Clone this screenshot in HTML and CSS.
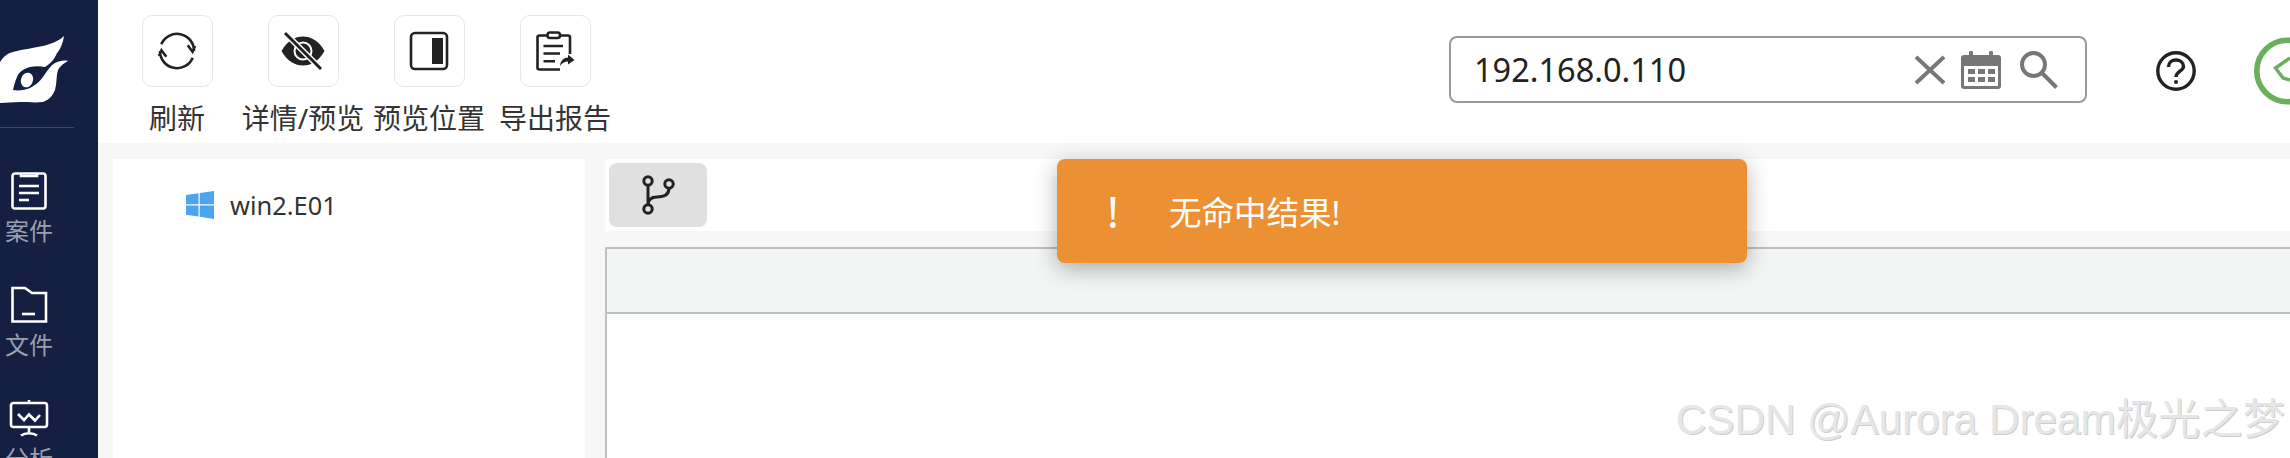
FILE: index.html
```html
<!DOCTYPE html>
<html lang="zh-CN">
<head>
    <meta charset="UTF-8">
    <meta name="viewport" content="width=device-width, initial-scale=1.0">
    <title>案件</title>
    <link rel="stylesheet" href="styles.css">
</head>
<body>
    <div class="sidebar">
        <div class="logo">
            <svg width="98" height="127" viewBox="0 0 98 127">
                <path fill="#fff" d="M0 62 C4 56 8 53 13 52 C24 49 34 48 43 46 C51 44 59 41 64 36 C63 43 60 50 57 53 C54 60 50 64 45 67 C40 66 35 66 30 67 C23 69 19 72 17 77 C15 81 14 86 13 90 C19 91 25 90 30 88 C36 85 40 81 43 77 C47 71 50 66 55 63 C59 61 64 60 68 61 C64 63 60 66 58 70 C56 76 57 83 55 90 C53 95 49 100 43 102 C35 103 28 102 20 102 C13 102 6 103 0 103 Z"/>
                <ellipse fill="#fff" cx="27" cy="80" rx="6" ry="7.5" transform="rotate(20 27 80)"/>
            </svg>
        </div>
        <div class="side-item first">
            <svg class="side-icon" width="58" height="40" viewBox="0 0 58 40">
                <rect x="12.5" y="2.5" width="33" height="35" rx="2.5"/>
                <path d="M21 2.5 V5 H37 V2.5 M19 15 H39 M19 22 H39 M19 29 H29"/>
            </svg>
            <span>案件</span>
        </div>
        <div class="side-item">
            <svg class="side-icon" width="58" height="40" viewBox="0 0 58 40">
                <path d="M12.5 3 H25 L32 8 H46 V36.5 H12.5 Z"/>
                <path d="M22 29 H35"/>
            </svg>
            <span>文件</span>
        </div>
        <div class="side-item">
            <svg class="side-icon" width="58" height="40" viewBox="0 0 58 40">
                <rect x="11" y="4" width="36" height="24" rx="2.5"/>
                <path d="M29 1 V4 M18 15 L24 21 L29 15.5 L35 21.5 L40 16 M29 28 V33 M21 36.5 C25 33.5 33 33.5 37 36.5"/>
            </svg>
            <span>分析</span>
        </div>
    </div>

    <div class="main">
        <div class="topbar">
            <div class="tools">
                <div class="tool">
                    <div class="tool-btn">
                        <svg class="tool-icon" width="48" height="48" viewBox="0 0 48 48">
                            <path d="M8.3 17.3 A17 17 0 0 1 41 24 M34.7 18.3 L39.5 24.7 L42 19 M7 24 A17 17 0 0 0 39.7 30.7 M13.3 29.7 L8.5 23.3 L6 29"/>
                        </svg>
                    </div>
                    <span>刷新</span>
                </div>
                <div class="tool">
                    <div class="tool-btn">
                        <svg class="tool-icon" width="48" height="48" viewBox="0 0 48 48">
                            <path class="solid" d="M2.5 24 C8 14 16 9.5 24 9.5 C32 9.5 40 14 45.5 24 C40 34 32 38.5 24 38.5 C16 38.5 8 34 2.5 24 Z"/>
                            <circle cx="24" cy="24" r="8.5" stroke="#fff" stroke-width="2"/>
                            <path stroke="#fff" stroke-width="6" d="M6 6 L42 42"/>
                            <path d="M6 6 L42 42" stroke-width="3"/>
                        </svg>
                    </div>
                    <span>详情/预览</span>
                </div>
                <div class="tool">
                    <div class="tool-btn">
                        <svg class="tool-icon" width="48" height="48" viewBox="0 0 48 48">
                            <rect x="6" y="6" width="36" height="36" rx="4"/>
                            <rect class="solid" x="27" y="11" width="11" height="26"/>
                        </svg>
                    </div>
                    <span>预览位置</span>
                </div>
                <div class="tool">
                    <div class="tool-btn">
                        <svg class="tool-icon" width="48" height="48" viewBox="0 0 48 48">
                            <rect x="16.5" y="5.5" width="12.5" height="5.5" rx="2.5"/>
                            <path d="M16 8.5 H8.5 Q6.5 8.5 6.5 10.5 V41 Q6.5 42.5 8.5 42.5 H29 M29.5 8.5 H37 Q39 8.5 39 10.5 V27 M12.5 19 H32 M12.5 26.5 H29 M12.5 34.3 H24"/>
                            <path class="solid" d="M29 39 C29.5 33.5 33 30.5 37 30.5 V27.5 L43.5 33 L37 37.5 V34.5 C33.5 34.5 31 36 29 39 Z"/>
                        </svg>
                    </div>
                    <span>导出报告</span>
                </div>
            </div>

            <div class="search">
                <span class="search-text">192.168.0.110</span>
                <svg class="search-icon clear" width="30" height="30" viewBox="0 0 30 30">
                    <path d="M1 2 L29 28 M29 2 L1 28"/>
                </svg>
                <svg class="calendar" width="40" height="38" viewBox="0 0 40 38">
                    <path fill="#777" d="M3 4 H8 V1 Q8 0 10 0 Q12 0 12 1 V4 H28 V1 Q28 0 30 0 Q32 0 32 1 V4 H37 Q40 4 40 7 V35 Q40 38 37 38 H3 Q0 38 0 35 V7 Q0 4 3 4 Z"/>
                    <rect fill="#fff" x="3" y="15" width="34" height="20"/>
                    <g fill="#777">
                        <rect x="7" y="18" width="7" height="5"/>
                        <rect x="17" y="18" width="7" height="5"/>
                        <rect x="27" y="18" width="7" height="5"/>
                        <rect x="7" y="26" width="7" height="5"/>
                        <rect x="17" y="26" width="7" height="5"/>
                        <rect x="27" y="26" width="7" height="5"/>
                    </g>
                </svg>
                <svg class="search-icon" width="38" height="38" viewBox="0 0 38 38">
                    <circle cx="13.5" cy="13.5" r="11.5"/>
                    <path d="M22 22 L36.5 36.5"/>
                </svg>
            </div>

            <svg class="help" width="40" height="40" viewBox="0 0 40 40">
                <circle cx="20" cy="20" r="18.2"/>
                <path d="M12.5 16 C12.5 11.5 16 9 20 9 C24 9 27.5 11.5 27.5 15.5 C27.5 20 20 20.5 20 26"/>
                <circle class="dot" cx="20" cy="31" r="2"/>
            </svg>

            <svg class="status" width="36" height="68" viewBox="0 0 36 68">
                <circle cx="33.5" cy="34" r="30.7"/>
                <path d="M36 21 L21.5 31 L29 41 L36 43"/>
            </svg>
        </div>

        <div class="content">
            <div class="tree">
                <div class="tree-row">
                    <svg width="28" height="28" viewBox="0 0 28 28">
                        <path fill="#4aa5ee" d="M0 4 L12.5 2.3 V13.2 H0 Z M13.7 2.1 L28 0 V13.2 H13.7 Z M0 14.6 H12.5 V25.4 L0 23.8 Z M13.7 14.6 H28 V28 L13.7 25.8 Z"/>
                    </svg>
                    <span>win2.E01</span>
                </div>
            </div>
            <div class="panel">
                <div class="panel-bar">
                    <div class="branch-btn">
                        <svg class="branch-icon" width="40" height="48" viewBox="0 0 40 48">
                            <circle cx="10" cy="10" r="4.2"/>
                            <circle cx="31" cy="13" r="4.2"/>
                            <circle cx="10" cy="38" r="4.2"/>
                            <path d="M10 14 V34 M31 17 C31 25 24 26 19 26 C14 26 10 28 10 34"/>
                        </svg>
                    </div>
                </div>
                <div class="grid">
                    <div class="grid-head"></div>
                </div>
            </div>
        </div>
    </div>

    <div class="toast">
        <span class="toast-mark">!</span>
        <span>无命中结果!</span>
    </div>
    <div class="watermark">CSDN @Aurora Dream极光之梦</div>
</body>
</html>
```

FILE: styles.css
```css
html, body {
    margin: 0;
    height: 458px;
    overflow: hidden;
}
body {
    position: relative;
    display: flex;
    font-family: "Noto Sans", "Noto Sans CJK SC", sans-serif;
    color: #333;
    background-color: #f7f7f7;
}
svg {
    display: block;
    flex: none;
}

/* menu on the left */
.sidebar {
    flex: none;
    width: 98px;
    height: 458px;
    overflow: hidden;
    background-color: #141f42;
    color: #9a9fae;
    font-size: 24px;
}
.logo {
    height: 127px;
    border-bottom: 1px solid #3d4872;
    width: 74px;
    overflow: hidden;
}
.logo svg {
    width: 98px;
}
.side-item {
    width: 58px;
    height: 114px;
    text-align: center;
}
.side-item.first {
    margin-top: 43px;
}
.side-item span {
    display: block;
    margin-top: 5px;
    line-height: 30px;
}
.side-icon {
    fill: none;
    stroke: #fff;
    stroke-width: 2.6;
}

/* top bar */
.main {
    flex: 1;
    min-width: 0;
    display: flex;
    flex-direction: column;
}
.topbar {
    flex: none;
    height: 143px;
    background-color: white;
    display: flex;
    align-items: flex-start;
    overflow: hidden;
}
.tools {
    display: flex;
    padding-left: 16px;
    width: 1351px;
    box-sizing: border-box;
}
.tool {
    width: 126px;
    display: flex;
    flex-direction: column;
    align-items: center;
    font-size: 28px;
    white-space: nowrap;
}
.tool-btn {
    width: 71px;
    height: 72px;
    margin-top: 15px;
    box-sizing: border-box;
    border: 1px solid #e6e6e6;
    border-radius: 10px;
    display: flex;
    align-items: center;
    justify-content: center;
}
.tool span {
    margin-top: 12px;
    line-height: 38px;
}
.tool-icon {
    fill: none;
    stroke: #222;
    stroke-width: 2.6;
}
.tool-icon .solid {
    fill: #222;
    stroke: none;
}

.search {
    width: 638px;
    height: 67px;
    margin-top: 36px;
    box-sizing: border-box;
    border: 2px solid #999;
    border-radius: 8px;
    padding-left: 23px;
    display: flex;
    align-items: center;
}
.search-text {
    width: 441px;
    font-size: 32.5px;
    color: #222;
}
.search-icon {
    fill: none;
    stroke: #777;
    stroke-width: 4;
}
.clear {
    margin-right: 16px;
}
.calendar {
    margin-right: 19px;
}
.help {
    margin: 51px 0 0 69px;
    fill: none;
    stroke: #222;
    stroke-width: 3.4;
}
.help .dot {
    fill: #222;
    stroke: none;
}
.status {
    margin: 37px 0 0 58px;
    fill: none;
    stroke: #6ab05c;
    stroke-width: 5.6;
}
.status path {
    stroke-width: 3.4;
}

/* content */
.content {
    flex: 1;
    min-height: 0;
    display: flex;
    gap: 20px;
    padding: 16px 0 0 15px;
}
.tree {
    flex: none;
    width: 472px;
    background-color: white;
}
.tree-row {
    display: flex;
    align-items: center;
    gap: 16px;
    margin: 32px 0 0 73px;
    font-size: 25.4px;
    line-height: 28px;
}
.panel {
    flex: 1;
    min-width: 0;
    display: flex;
    flex-direction: column;
    gap: 16px;
}
.panel-bar {
    flex: none;
    height: 72px;
    background-color: white;
    padding: 4px;
    box-sizing: border-box;
}
.branch-btn {
    width: 98px;
    height: 64px;
    background-color: #e0e0e0;
    border-radius: 8px;
    display: flex;
    align-items: center;
    justify-content: center;
}
.branch-icon {
    fill: none;
    stroke: #222;
    stroke-width: 3;
}
.grid {
    flex: 1;
    background-color: white;
    border-top: 2px solid #bcc1c6;
    border-left: 2px solid #bcc1c6;
}
.grid-head {
    height: 63px;
    background-color: #f3f5f5;
    border-bottom: 2px solid #bcc1c6;
}

/* things over the page */
.toast {
    position: absolute;
    left: 1057px;
    top: 159px;
    width: 690px;
    height: 104px;
    background-color: #ec9133;
    border-radius: 8px;
    box-shadow: 0 6px 22px rgba(0,0,0,0.3);
    color: white;
    font-size: 32.5px;
    display: flex;
    align-items: center;
}
.toast-mark {
    width: 112px;
    text-align: center;
    font-size: 44px;
    line-height: 1;
}
.watermark {
    position: absolute;
    right: 5px;
    top: 394px;
    font-family: "Liberation Sans", "Noto Sans CJK SC", sans-serif;
    font-size: 42.3px;
    line-height: 52px;
    white-space: nowrap;
    color: #e6e6e6;
    text-shadow: 1px 1px 0 #cdcdcd;
}
```
